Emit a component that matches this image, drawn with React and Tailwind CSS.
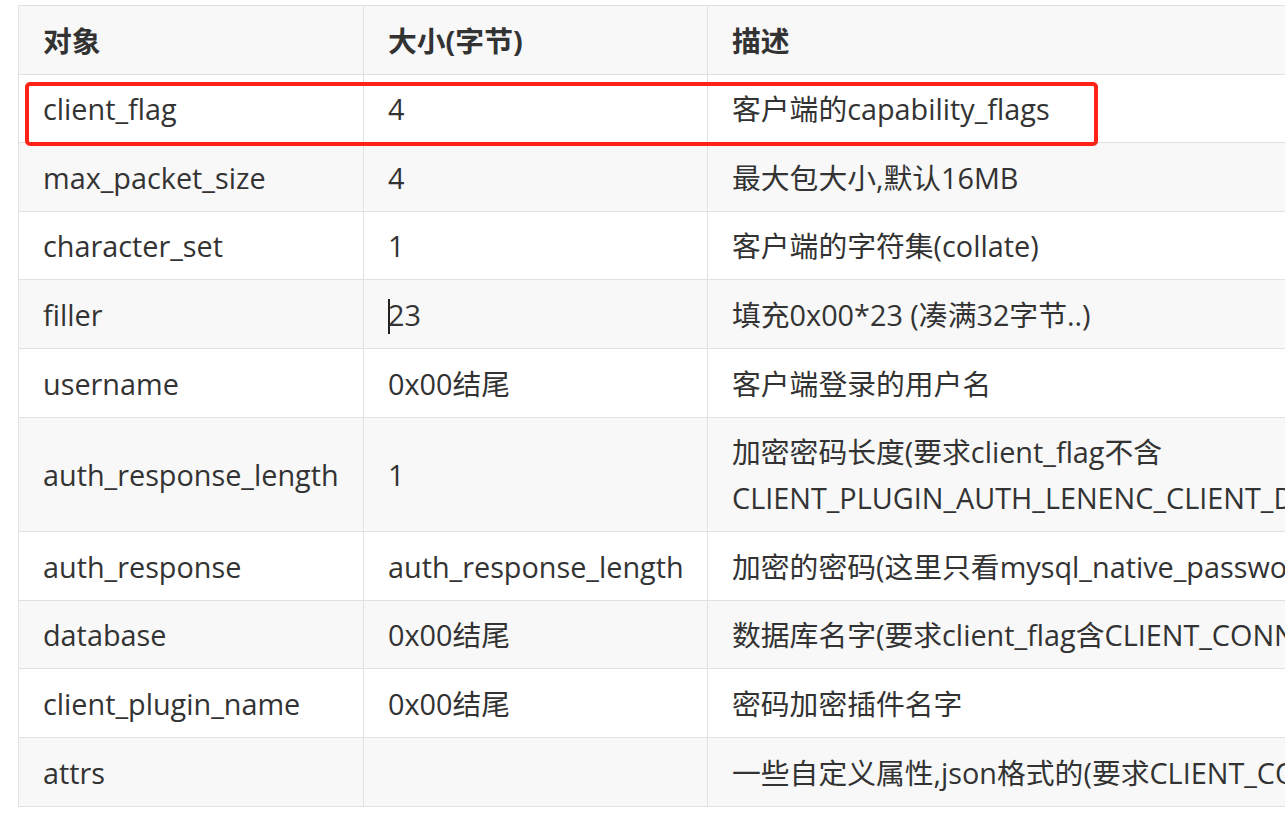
import React from "react";

const rows = [
  ["client_flag", "4", "客户端的capability_flags"],
  ["max_packet_size", "4", "最大包大小,默认16MB"],
  ["character_set", "1", "客户端的字符集(collate)"],
  ["filler", "23", "填充0x00*23 (凑满32字节..)"],
  ["username", "0x00结尾", "客户端登录的用户名"],
  ["auth_response_length", "1", "加密密码长度(要求client_flag不含CLIENT_PLUGIN_AUTH_LENENC_CLIENT_DATA)"],
  ["auth_response", "auth_response_length", "加密的密码(这里只看mysql_native_password)"],
  ["database", "0x00结尾", "数据库名字(要求client_flag含CLIENT_CONNECT_WITH_DB)"],
  ["client_plugin_name", "0x00结尾", "密码加密插件名字"],
  ["attrs", "", "一些自定义属性,json格式的(要求CLIENT_CONNECT_ATTRS)"],
];

const cell = "border border-[#dfe2e5] pl-[24px] pr-[22px] pt-[11.6px] pb-[10px] text-left align-middle";

export default function App() {
  return (
    <div
      className="relative w-[1285px] h-[817px] overflow-hidden bg-white text-[#333] text-[28.8px] leading-[46px]"
      style={{ fontFamily: '"Open Sans", "Noto Sans CJK SC", sans-serif' }}
    >
      <table className="mt-[5px] ml-[18px] table-fixed border-collapse w-[1589px]">
        <colgroup>
          <col className="w-[345px]" />
          <col className="w-[344px]" />
          <col className="w-[900px]" />
        </colgroup>
        <thead>
          <tr className="bg-[#f8f8f8]">
            <th className={cell + " font-bold"}>对象</th>
            <th className={cell + " font-bold"}>大小(字节)</th>
            <th className={cell + " font-bold"}>描述</th>
          </tr>
        </thead>
        <tbody>
          {rows.map((r, i) => (
            <tr key={i} className={i % 2 === 1 ? "bg-[#f8f8f8]" : "bg-white"}>
              <td className={cell}>{r[0]}</td>
              <td className={cell}>
                {r[0] === "filler" && (
                  <span className="inline-block w-[1.5px] h-[35px] bg-[#222] -mr-[1.5px] align-[-8px]" />
                )}
                {r[1]}
              </td>
              <td className={cell}>{r[2]}</td>
            </tr>
          ))}
        </tbody>
      </table>
      <div className="absolute left-[25px] top-[82px] w-[1073px] h-[64px] border-4 border-[#ff2216] rounded-[5px]" />
    </div>
  );
}
